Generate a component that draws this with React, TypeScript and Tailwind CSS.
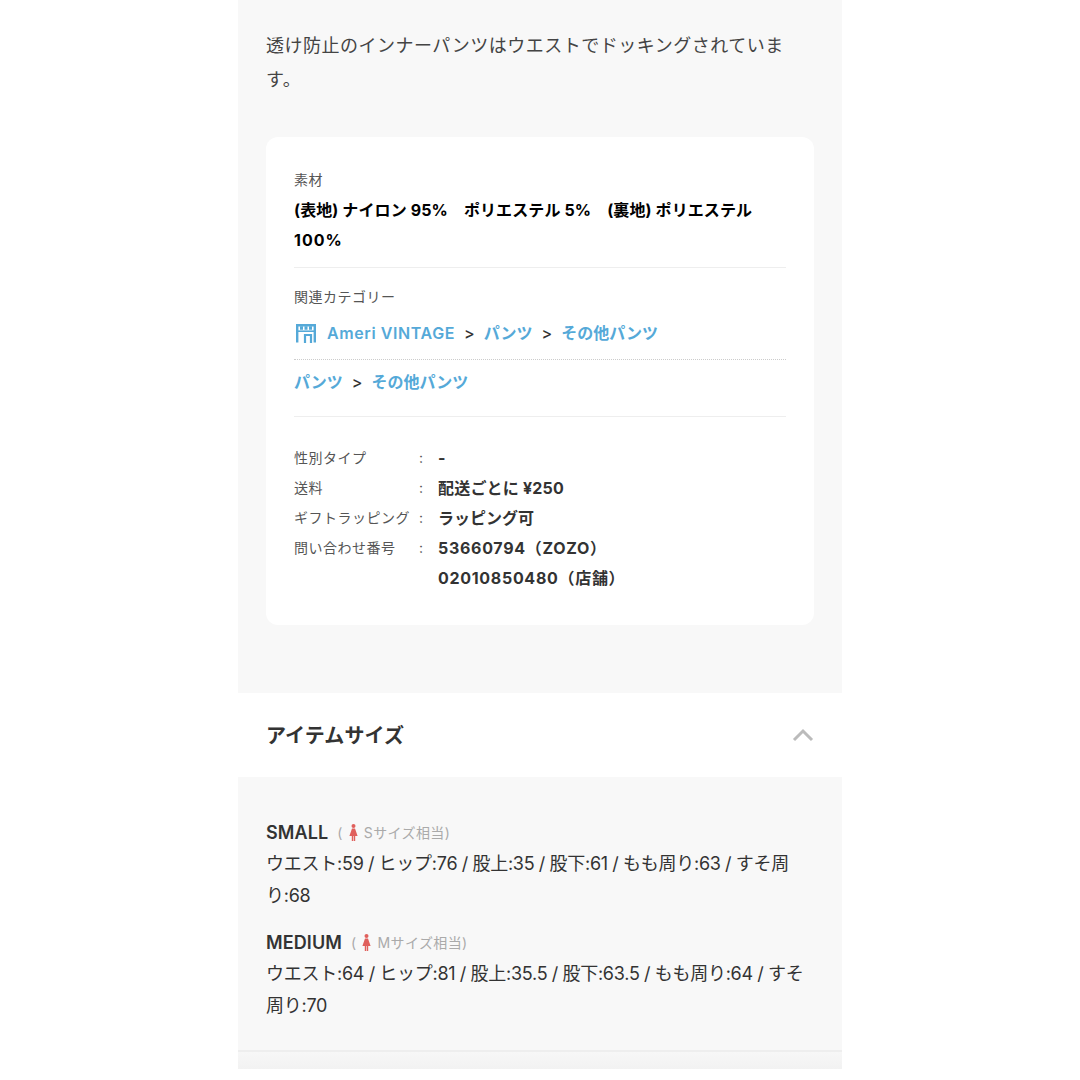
const font = { fontFamily: '"Inter", "Noto Sans CJK JP", sans-serif' };

function Shop() {
  return (
    <svg width="20" height="19" viewBox="0 0 20 19" fill="none" className="shrink-0 ml-[2px]">
      <path d="M1.2 18.5V1.2h17.6v17.3" stroke="#55a9d8" strokeWidth="2.4" />
      <path d="M1 7.2h18" stroke="#55a9d8" strokeWidth="1.6" />
      <path d="M4 4h3M8.5 4h3M13 4h3" stroke="#55a9d8" strokeWidth="3.4" />
      <path d="M9 19v-8h6v8" stroke="#55a9d8" strokeWidth="2.2" />
    </svg>
  );
}

function Woman() {
  return (
    <svg width="9" height="17" viewBox="0 0 9 17" className="shrink-0">
      <circle cx="4.5" cy="2" r="2" fill="#e0605c" />
      <path d="M3 4.6h3l2.6 7.4H6.2v5H4.8v-5h-.6v5H2.8v-5H.4z" fill="#e0605c" />
    </svg>
  );
}

function Link({ children, wide }: { children: string; wide?: boolean }) {
  return <span className={wide ? "text-[#55a9d8] font-semibold tracking-[0.6px]" : "text-[#55a9d8] font-semibold"}>{children}</span>;
}

function Sep() {
  return <span className="mx-[9px] text-[#333] font-medium">&gt;</span>;
}

function Row({ label, children }: { label: string; children: React.ReactNode }) {
  return (
    <div className="flex leading-[30px]">
      <div className="w-[125px] shrink-0 text-[14px] text-[#555] tracking-[0.5px]">{label}</div>
      <div className="w-[19px] shrink-0 text-[14px] text-[#555]">:</div>
      <div className="text-[16px] font-bold text-[#333]">{children}</div>
    </div>
  );
}

function Size({ name, sub, sizeLetter, children }: { name: string; sub: string; sizeLetter: string; children: string }) {
  return (
    <div>
      <div className="flex items-center h-[28px] text-[#333]">
        <span className="text-[18px] font-semibold tracking-[0.1px]">{name}</span>
        <span className="ml-[9px] flex items-center gap-[6px] text-[14px] text-[#aaa] tracking-[0.4px]">
          <span>(</span>
          <Woman />
          <span>{sizeLetter}{sub})</span>
        </span>
      </div>
      <p className="mt-[2px] text-[18px] leading-[32px] text-[#333] tracking-[-0.25px] [word-spacing:-0.4px]">{children}</p>
    </div>
  );
}

export default function App() {
  return (
    <div className="bg-white min-h-[1080px] flex justify-center" style={font}>
      <div className="w-[604px] h-[1069px] bg-[#f8f8f8] flex flex-col">
        <div className="px-[28px] pt-[29px] pb-[68px]">
          <p className="text-[18px] leading-[34px] text-[#444] h-[68px] tracking-[0.5px]">透け防止のインナーパンツはウエストでドッキングされています。</p>
          <div className="mt-[40px] bg-white rounded-[12px] px-[28px] pt-[28px] pb-[32px] h-[488px]">
            <div className="text-[14px] leading-[30px] text-[#555] tracking-[0.5px]">素材</div>
            <div className="text-[16px] leading-[30px] font-bold text-black tracking-[0.1px]">(表地) ナイロン 95%　ポリエステル 5%　(裏地) ポリエステル <span className="tracking-[1px]">100%</span></div>
            <div className="mt-[12px] border-t border-[#eeeeee]" />
            <div className="mt-[14px] text-[14px] leading-[30px] text-[#555] tracking-[0.5px]">関連カテゴリー</div>
            <div className="mt-[6px] flex items-center h-[30px] text-[16px]">
              <Shop />
              <span className="ml-[11px]"><Link wide>Ameri VINTAGE</Link></span>
              <Sep />
              <Link>パンツ</Link>
              <Sep />
              <Link>その他パンツ</Link>
            </div>
            <div className="mt-[11px] border-t border-dotted border-[#cccccc]" />
            <div className="mt-[7px] flex items-center h-[30px] text-[16px]">
              <Link>パンツ</Link>
              <Sep />
              <Link>その他パンツ</Link>
            </div>
            <div className="mt-[19px] border-t border-[#eeeeee]" />
            <div className="mt-[26px]">
              <Row label="性別タイプ">-</Row>
              <Row label="送料"><span className="tracking-[0.2px]">配送ごとに ¥250</span></Row>
              <Row label="ギフトラッピング">ラッピング可</Row>
              <Row label="問い合わせ番号">
                <div className="tracking-[0.7px]">53660794（ZOZO）</div>
                <div className="tracking-[0.7px]">02010850480（店舗）</div>
              </Row>
            </div>
          </div>
        </div>
        <div className="bg-white h-[84px] shrink-0 px-[28px] pt-[1px] flex items-center justify-between">
          <span className="text-[20px] font-bold text-[#333] tracking-[0.1px]">アイテムサイズ</span>
          <svg width="22" height="14" viewBox="0 0 22 14" fill="none" className="-mt-[2px]">
            <path d="M2 12l9-9 9 9" stroke="#bbbbbb" strokeWidth="3" />
          </svg>
        </div>
        <div className="flex-1 flex flex-col px-[28px] pt-[41px]">
          <div className="flex flex-col gap-[16px]">
            <Size name="SMALL" sizeLetter="S" sub="サイズ相当">ウエスト:59 / ヒップ:76 / 股上:35 / 股下:61 / もも周り:63 / すそ周り:68</Size>
            <Size name="MEDIUM" sizeLetter="M" sub="サイズ相当">ウエスト:64 / ヒップ:81 / 股上:35.5 / 股下:63.5 / もも周り:64 / すそ周り:70</Size>
          </div>
        </div>
        <div className="h-[19px] shrink-0 border-t-2 border-[#eeeeee] bg-gradient-to-b from-[#f7f7f7] to-[#f2f2f2]" />
      </div>
    </div>
  );
}
